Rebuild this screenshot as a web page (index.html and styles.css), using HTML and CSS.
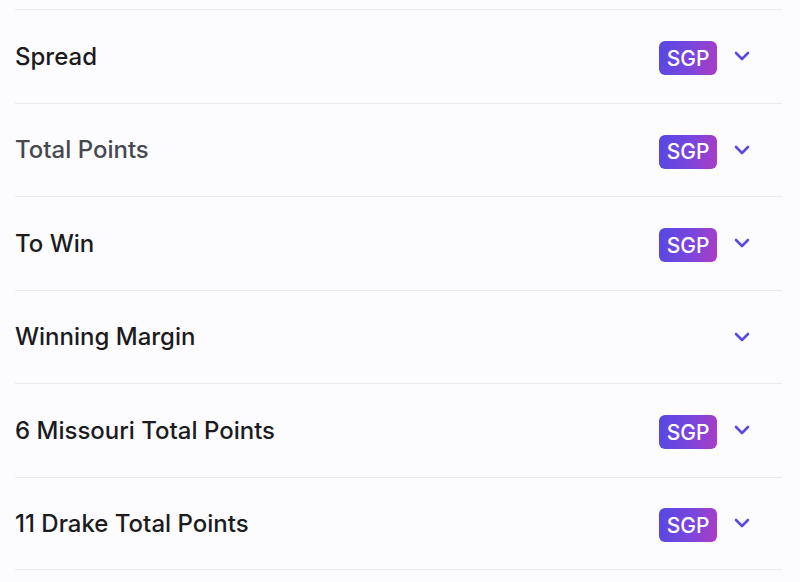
FILE: index.html
```html
<!DOCTYPE html>
<html lang="en">
<head>
    <meta charset="UTF-8">
    <meta name="viewport" content="width=device-width, initial-scale=1.0">
    <title>Markets</title>
    <link rel="stylesheet" href="styles.css">
</head>
<body>
<div class="markets">
    <div class="market">
        <span class="market-name">Spread</span>
        <div class="market-actions">
            <span class="sgp">SGP</span>
            <span class="chevron"><svg width="16" height="10" viewBox="0 0 16 10"><path d="M2 2l6 6 6-6" fill="none" stroke="currentColor" stroke-width="2.6" stroke-linecap="round" stroke-linejoin="round"/></svg></span>
        </div>
    </div>
    <div class="market">
        <span class="market-name muted">Total Points</span>
        <div class="market-actions">
            <span class="sgp">SGP</span>
            <span class="chevron"><svg width="16" height="10" viewBox="0 0 16 10"><path d="M2 2l6 6 6-6" fill="none" stroke="currentColor" stroke-width="2.6" stroke-linecap="round" stroke-linejoin="round"/></svg></span>
        </div>
    </div>
    <div class="market">
        <span class="market-name">To Win</span>
        <div class="market-actions">
            <span class="sgp">SGP</span>
            <span class="chevron"><svg width="16" height="10" viewBox="0 0 16 10"><path d="M2 2l6 6 6-6" fill="none" stroke="currentColor" stroke-width="2.6" stroke-linecap="round" stroke-linejoin="round"/></svg></span>
        </div>
    </div>
    <div class="market">
        <span class="market-name">Winning Margin</span>
        <div class="market-actions">
            <span class="chevron"><svg width="16" height="10" viewBox="0 0 16 10"><path d="M2 2l6 6 6-6" fill="none" stroke="currentColor" stroke-width="2.6" stroke-linecap="round" stroke-linejoin="round"/></svg></span>
        </div>
    </div>
    <div class="market">
        <span class="market-name">6 Missouri Total Points</span>
        <div class="market-actions">
            <span class="sgp">SGP</span>
            <span class="chevron"><svg width="16" height="10" viewBox="0 0 16 10"><path d="M2 2l6 6 6-6" fill="none" stroke="currentColor" stroke-width="2.6" stroke-linecap="round" stroke-linejoin="round"/></svg></span>
        </div>
    </div>
    <div class="market">
        <span class="market-name">11 Drake Total Points</span>
        <div class="market-actions">
            <span class="sgp">SGP</span>
            <span class="chevron"><svg width="16" height="10" viewBox="0 0 16 10"><path d="M2 2l6 6 6-6" fill="none" stroke="currentColor" stroke-width="2.6" stroke-linecap="round" stroke-linejoin="round"/></svg></span>
        </div>
    </div>
</div>
</body>
</html>
```

FILE: styles.css
```css
/* Общие стили */
body {
    margin: 0;
    padding: 0;
    background-color: #fcfcfe;
    font-family: Inter, "Noto Sans", sans-serif;
    color: #1b1b20;
}

.markets {
    margin: 0 18px 0 15px;
    padding-top: 9px;
}

.market {
    height: 93.5px;
    box-sizing: border-box;
    border-top: 1px solid #ebebef;
    display: flex;
    justify-content: space-between;
    align-items: center;
}

.market:last-child {
    border-bottom: 1px solid #ebebef;
}

.market-name {
    font-size: 24px;
    font-weight: 500;
}

.market-name.muted {
    color: #48484f;
}

.market-actions {
    display: flex;
    align-items: center;
    gap: 13px;
    padding-right: 28px;
}

/* Бейдж SGP */
.sgp {
    width: 58px;
    height: 34px;
    margin-top: 4px;
    border-radius: 6px;
    background: linear-gradient(100deg, #5548e4 0%, #7a46dc 55%, #ac3cc4 100%);
    color: #fff;
    font-size: 21px;
    font-weight: 500;
    display: flex;
    align-items: center;
    justify-content: center;
}

.chevron {
    width: 24px;
    height: 24px;
    color: #5a4be0;
    display: flex;
    align-items: center;
    justify-content: center;
}
```
